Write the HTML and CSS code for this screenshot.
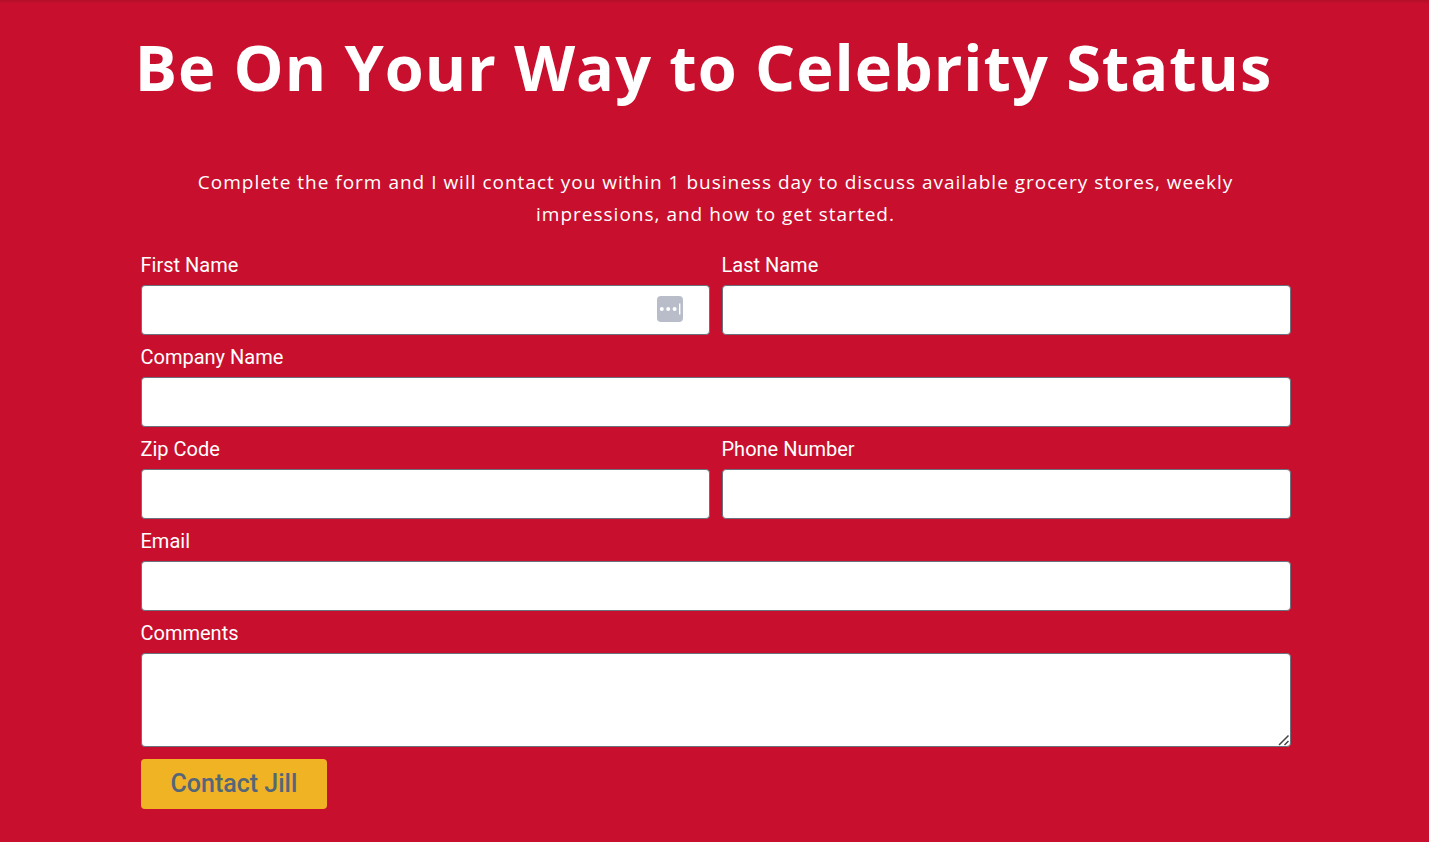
FILE: index.html
```html
<!DOCTYPE html>
<html lang="en">
<head>
<meta charset="utf-8">
<title>Contact Jill</title>
<link rel="stylesheet" href="styles.css">
</head>
<body>
<main class="section">
  <h1 class="title">Be On Your Way to Celebrity Status</h1>
  <p class="intro">Complete the form and I will contact you within 1 business day to discuss available grocery stores, weekly impressions, and how to get started.</p>
  <form class="form">
    <div class="field">
      <label class="label" for="first">First Name</label>
      <div class="control">
        <input class="input" id="first" type="text">
        <svg class="autofill" viewBox="0 0 26 26" aria-hidden="true"><rect width="26" height="26" rx="4" fill="#b8bdc9"/><g fill="#fff"><circle cx="4.800" cy="13" r="2"/><circle cx="11.200" cy="13" r="2"/><circle cx="17.600" cy="13" r="2"/><rect x="22" y="7.500" width="1.400" height="11"/></g></svg>
      </div>
    </div>
    <div class="field">
      <label class="label" for="last">Last Name</label>
      <input class="input" id="last" type="text">
    </div>
    <div class="field wide">
      <label class="label" for="company">Company Name</label>
      <input class="input" id="company" type="text">
    </div>
    <div class="field">
      <label class="label" for="zip">Zip Code</label>
      <input class="input" id="zip" type="text">
    </div>
    <div class="field">
      <label class="label" for="phone">Phone Number</label>
      <input class="input" id="phone" type="tel">
    </div>
    <div class="field wide">
      <label class="label" for="email">Email</label>
      <input class="input" id="email" type="email">
    </div>
    <div class="field wide">
      <label class="label" for="comments">Comments</label>
      <div class="control">
        <textarea class="input area" id="comments"></textarea>
        <svg class="grip" viewBox="0 0 12 12" aria-hidden="true"><path d="M1 11 10.500 1.500M6.500 11l4-4" fill="none" stroke="#444" stroke-width="1.500"/></svg>
      </div>
    </div>
    <button class="submit" type="submit">Contact Jill</button>
  </form>
</main>
</body>
</html>
```
FILE: styles.css
```css
* { box-sizing: border-box; }
body {
  margin: 0;
  padding-left: 2px;
  background: #c8102e linear-gradient(#b30f2a, #c8102e) 0 0 / 100% 4px no-repeat;
  color: #fff;
  font-family: Roboto, sans-serif;
}
.section {
  max-width: 1150px;
  margin: 0 auto;
  padding: 34px 0 32px;
}
.title {
  margin: 0 12px 66px -12px;
  font: 700 63px/66px "Open Sans", sans-serif;
  letter-spacing: 1px;
  text-align: center;
}
.intro {
  margin: 0;
  padding: 0 40px;
  font: 400 19px/32px "Open Sans", sans-serif;
  letter-spacing: 1px;
  text-align: center;
}
.form {
  display: grid;
  grid-template-columns: 1fr 1fr;
  gap: 12px;
  margin-top: 25px;
}
.field {
  display: flex;
  flex-direction: column;
  gap: 10px;
}
.wide { grid-column: 1 / -1; }
.label {
  font-size: 20px;
  line-height: 20px;
}
.control { position: relative; }
.input {
  display: block;
  width: 100%;
  height: 50px;
  padding: 8px 16px;
  border: 1px solid #69727d;
  border-radius: 4px;
  background: #fff;
  font: 400 20px/28px Roboto, sans-serif;
}
.area {
  height: 94px;
  resize: vertical;
}
.area::-webkit-resizer { background: transparent; }
.autofill {
  position: absolute;
  top: 11px;
  right: 27px;
  width: 26px;
  height: 26px;
}
.grip {
  position: absolute;
  right: 1px;
  bottom: 1px;
  width: 12px;
  height: 12px;
  pointer-events: none;
}
.submit {
  justify-self: start;
  height: 50px;
  padding: 0 30px;
  border: 0;
  border-radius: 4px;
  background: #f0b323;
  color: #54667a;
  font: 500 25px/50px Roboto, sans-serif;
}
```
